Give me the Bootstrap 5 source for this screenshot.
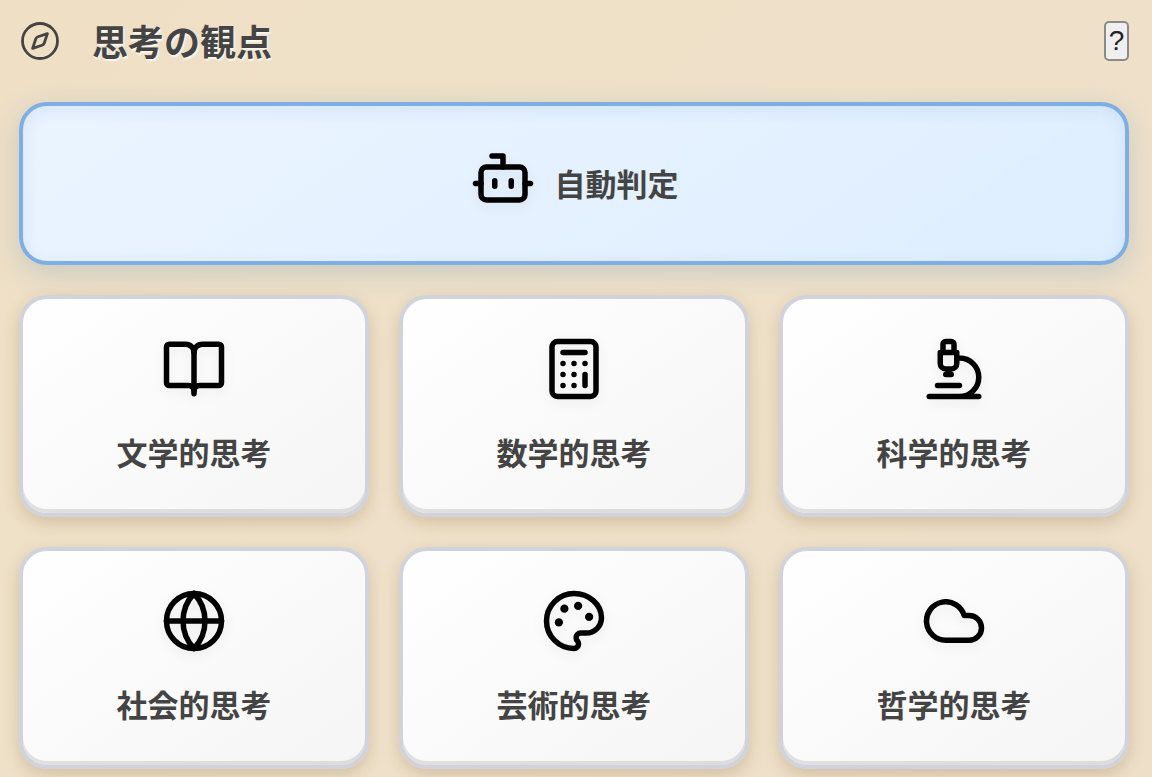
<!DOCTYPE html>
<html lang="ja">
<head>
<meta charset="utf-8">
<meta name="viewport" content="width=device-width, initial-scale=1">
<title>思考の観点</title>
<link rel="stylesheet" href="https://cdn.jsdelivr.net/npm/bootstrap@5.3.0/dist/css/bootstrap.min.css">
<style>
  body {
    min-height: 100vh;
    background: linear-gradient(135deg, #eedfc5 0%, #efe1c9 50%, #eedfc8 100%);
    color: #444;
    font-family: "Noto Sans CJK JP", sans-serif;
  }
  .page { padding: 20px 23px 6px 19px; }
  .page-head { margin-bottom: 40px; }
  .page-title {
    padding-bottom: 2px;
    font-size: 36px;
    line-height: 40px;
    font-weight: 700;
    text-shadow: 1px 2px 2px rgba(255, 255, 255, .8);
  }
  .icon { fill: none; stroke: currentColor; stroke-width: 2; stroke-linecap: round; stroke-linejoin: round; }
  .icon-compass { width: 42px; height: 42px; margin-right: 31px; stroke-width: 1.6; }
  .help-btn {
    width: 25px;
    height: 40px;
    border: 2px solid #8c8a88;
    border-radius: 5px;
    background: #efefef;
    color: #222;
    font-family: "Liberation Sans", sans-serif;
    font-size: 28px;
    line-height: 36px;
  }
  .choice-grid {
    grid-template-columns: repeat(3, minmax(0, 1fr));
    gap: 30px;
  }
  .choice {
    padding: 37px 16px 38px;
    border: 4px solid #d0d3dc;
    border-radius: 28px;
    background: linear-gradient(145deg, #fff 0%, #f5f5f5 100%);
    box-shadow: 0 6px 16px rgba(120, 90, 50, .24), inset 0 -4px 0 rgba(0, 0, 0, .1);
    color: #444;
    font-size: 31px;
    line-height: 46px;
    font-weight: 700;
    gap: 27px;
  }
  .choice .icon { width: 66px; height: 66px; color: #000; filter: drop-shadow(0 4px 6px rgba(0, 0, 0, .06)); }
  .choice-auto {
    grid-column: 1 / -1;
    min-height: 163px;
    gap: 19px;
    border-color: #7eaee3;
    background: linear-gradient(145deg, #ebf4ff 0%, #deeeff 100%);
    box-shadow: 0 8px 28px rgba(110, 155, 190, .3), inset 0 4px 16px rgba(90, 140, 190, .14);
  }
  .choice-auto .icon { margin-bottom: 10px; }
</style>
</head>
<body>
<main class="page container-fluid">
  <header class="page-head d-flex align-items-center">
    <svg class="icon icon-compass flex-shrink-0" viewBox="0 0 24 24" aria-hidden="true"><circle cx="12" cy="12" r="10"/><path d="m16.240 7.760-1.804 5.411a2 2 0 0 1-1.265 1.265L7.760 16.240l1.804-5.411a2 2 0 0 1 1.265-1.265z"/></svg>
    <h1 class="page-title mb-0">思考の観点</h1>
    <button type="button" class="help-btn ms-auto p-0 d-flex align-items-center justify-content-center">?</button>
  </header>

  <div class="choice-grid d-grid">
    <button type="button" class="choice choice-auto d-flex align-items-center justify-content-center">
      <svg class="icon" viewBox="0 0 24 24" aria-hidden="true"><path d="M12 8V4H8"/><rect x="4" y="8" width="16" height="12" rx="2"/><path d="M2 14h2M20 14h2M15 13v2M9 13v2"/></svg>
      <span>自動判定</span>
    </button>
    <button type="button" class="choice d-flex flex-column align-items-center">
      <svg class="icon" viewBox="0 0 24 24" aria-hidden="true"><path d="M12 5v16"/><path d="M3 18a1 1 0 0 1-1-1V4a1 1 0 0 1 1-1h6a3 3 0 0 1 3 3 3 3 0 0 1 3-3h6a1 1 0 0 1 1 1v13a1 1 0 0 1-1 1h-7a2 2 0 0 0-2 2 2 2 0 0 0-2-2z"/></svg>
      <span>文学的思考</span>
    </button>
    <button type="button" class="choice d-flex flex-column align-items-center">
      <svg class="icon" viewBox="0 0 24 24" aria-hidden="true"><rect x="4" y="2" width="16" height="20" rx="2"/><path d="M8 6h8M16 14v4M16 10h.01M12 10h.01M8 10h.01M12 14h.01M8 14h.01M12 18h.01M8 18h.01"/></svg>
      <span>数学的思考</span>
    </button>
    <button type="button" class="choice d-flex flex-column align-items-center">
      <svg class="icon" viewBox="0 0 24 24" aria-hidden="true"><path d="M6 18h8M3 22h18M14 22a7 7 0 1 0 0-14h-1M9 14h2M9 12a2 2 0 0 1-2-2V6h6v4a2 2 0 0 1-2 2ZM12 6V3a1 1 0 0 0-1-1H9a1 1 0 0 0-1 1v3"/></svg>
      <span>科学的思考</span>
    </button>
    <button type="button" class="choice d-flex flex-column align-items-center">
      <svg class="icon" viewBox="0 0 24 24" aria-hidden="true"><circle cx="12" cy="12" r="10"/><path d="M12 2a14.500 14.500 0 0 0 0 20 14.500 14.500 0 0 0 0-20M2 12h20"/></svg>
      <span>社会的思考</span>
    </button>
    <button type="button" class="choice d-flex flex-column align-items-center">
      <svg class="icon" viewBox="0 0 24 24" aria-hidden="true"><g fill="currentColor" stroke="none"><circle cx="13.500" cy="6.500" r="1.500"/><circle cx="17.500" cy="10.500" r="1.500"/><circle cx="8.500" cy="7.500" r="1.500"/><circle cx="6.500" cy="12.500" r="1.500"/></g><path d="M12 2C6.500 2 2 6.500 2 12s4.500 10 10 10c.926 0 1.648-.746 1.648-1.688 0-.437-.18-.835-.437-1.125-.29-.289-.438-.652-.438-1.125a1.640 1.640 0 0 1 1.668-1.668h1.996c3.051 0 5.555-2.503 5.555-5.554C21.965 6.012 17.461 2 12 2z"/></svg>
      <span>芸術的思考</span>
    </button>
    <button type="button" class="choice d-flex flex-column align-items-center">
      <svg class="icon" viewBox="0 0 24 24" aria-hidden="true"><path d="M17.500 19H9a7 7 0 1 1 6.710-9h1.790a4.500 4.500 0 1 1 0 9Z"/></svg>
      <span>哲学的思考</span>
    </button>
  </div>
</main>
<script src="https://cdn.jsdelivr.net/npm/bootstrap@5.3.0/dist/js/bootstrap.bundle.min.js"></script>
</body>
</html>
